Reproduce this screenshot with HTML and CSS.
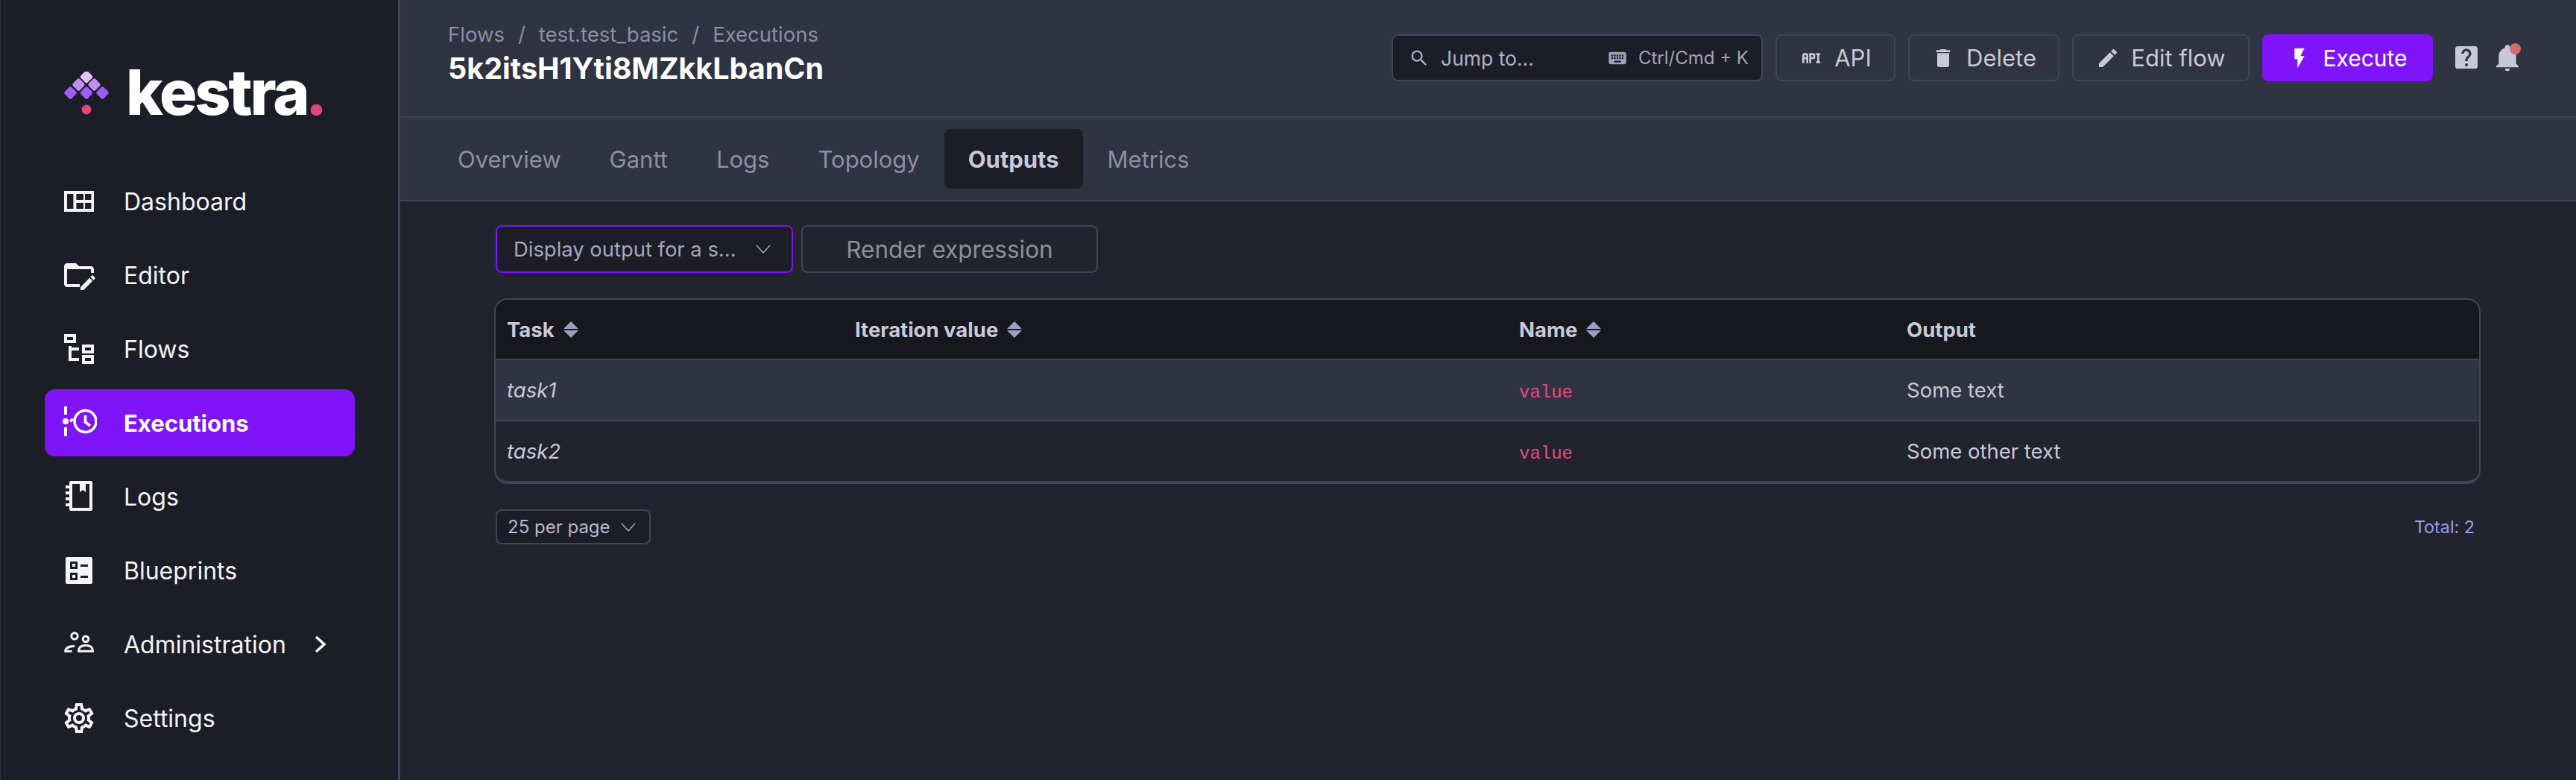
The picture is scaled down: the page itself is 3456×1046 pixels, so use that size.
FILE: index.html
```html
<!DOCTYPE html>
<html lang="en">
<head>
<meta charset="utf-8">
<title>Kestra - Execution outputs</title>
<link rel="stylesheet" href="styles.css">
</head>
<body>
<div class="app">
  <aside class="sidebar">
    <div class="brand">
      <svg class="brand-mark" viewBox="0 0 60 76" width="60" height="76">
        <g fill="#e0c4fb"><rect x="23.5" y="0.5" width="13" height="13" rx="2.5" transform="rotate(45 30 7)"/></g>
        <g fill="#c08ff5"><rect x="13" y="11" width="13" height="13" rx="2.5" transform="rotate(45 19.5 17.5)"/><rect x="34" y="11" width="13" height="13" rx="2.5" transform="rotate(45 40.5 17.5)"/></g>
        <g fill="#9f5cf5"><rect x="2" y="22" width="13" height="13" rx="2.5" transform="rotate(45 8.5 28.5)"/><rect x="23.5" y="22" width="13" height="13" rx="2.5" transform="rotate(45 30 28.5)"/><rect x="45" y="22" width="13" height="13" rx="2.5" transform="rotate(45 51.5 28.5)"/></g>
        <circle cx="30" cy="51" r="6.5" fill="#e0457b"/>
      </svg>
      <span class="brand-name">kestra<span class="brand-dot">.</span></span>
    </div>
    <nav class="nav">
      <a class="nav-item"><svg class="nav-icon" viewBox="0 0 24 24"><path fill-rule="evenodd" d="M2 5H22V19H2ZM4 7V17H8.2V7ZM10.2 7V11H15V7ZM16 7V11H20.2V7ZM10.2 13V17H15V13ZM16 13V17H20.2V13Z"/></svg><span>Dashboard</span></a>
      <a class="nav-item"><svg class="nav-icon" viewBox="0 0 24 24"><path d="M4 4C2.89 4 2 4.89 2 6V18C2 19.1 2.9 20 4 20H12.5V18H4V8H20V10.5H22V8C22 6.89 21.1 6 20 6H12L10 4H4Z"/><path transform="translate(1 1)" d="M21.7 13.35L20.7 14.35L18.65 12.3L19.65 11.3C19.86 11.09 20.21 11.09 20.42 11.3L21.7 12.58C21.91 12.79 21.91 13.14 21.7 13.35M12 18.94L18.06 12.88L20.11 14.93L14.06 21H12V18.94Z"/></svg><span>Editor</span></a>
      <a class="nav-item"><svg class="nav-icon" viewBox="0 0 24 24"><path d="M12 13H7V18H12V20H5V10H7V11H12V13M8 4V6H4V4H8M10 2H2V8H10V2M20 11V13H16V11H20M22 9H14V15H22V9M20 18V20H16V18H20M22 16H14V22H22V16Z"/></svg><span>Flows</span></a>
      <a class="nav-item is-active"><svg class="nav-icon" viewBox="0 0 48 48"><path d="M4 2H8V13H4ZM4 30H8V42H4Z"/><circle cx="6" cy="22" r="4"/><path class="stroke-thin" d="M12 22L16 19"/><circle class="stroke-thin" cx="32.5" cy="22" r="14.5"/><path class="stroke-thin" d="M32.5 14V23L39 28"/></svg><span>Executions</span></a>
      <a class="nav-item"><svg class="nav-icon" viewBox="0 0 48 48"><path fill-rule="evenodd" d="M11 5C11 3.9 11.9 3 13 3H40C41.1 3 42 3.9 42 5V41C42 42.1 41.1 43 40 43H13C11.9 43 11 42.1 11 41ZM15 7V39H38V7H33V18L29 15L25 18V7Z"/><path d="M6 9H11V13H6ZM6 17H11V21H6ZM6 25H11V29H6ZM6 33H11V37H6ZM11 13H15V17H11ZM11 21H15V25H11ZM11 29H15V33H11Z"/></svg><span>Logs</span></a>
      <a class="nav-item"><svg class="nav-icon" viewBox="0 0 48 48"><path fill-rule="evenodd" d="M8 6H40C41.1 6 42 6.9 42 8V40C42 41.1 41.1 42 40 42H8C6.9 42 6 41.1 6 40V8C6 6.9 6.9 6 8 6ZM12 12V22H22V12ZM15 15H19V19H15ZM12 27V37H22V27ZM15 30H19V34H15ZM26 16V19H36V16ZM26 31V34H36V31Z"/></svg><span>Blueprints</span></a>
      <a class="nav-item"><svg class="nav-icon" viewBox="0 0 48 48"><g class="stroke-slim"><circle cx="18" cy="13" r="4.2"/><circle cx="33" cy="17" r="3.8"/><path d="M5.5 34.5C5.5 29 10 26.5 18 26.5"/><path d="M5.5 33.3H14.5"/><path d="M23.5 33.3C23.5 28 27 25.5 33 25.5C39 25.5 42.5 28 42.5 33.3Z"/></g></svg><span>Administration</span><svg class="nav-chevron" viewBox="0 0 16 24"><path d="M2 2L13 12L2 22"/></svg></a>
      <a class="nav-item"><svg class="nav-icon" viewBox="0 0 24 24"><path d="M12,8A4,4 0 0,1 16,12A4,4 0 0,1 12,16A4,4 0 0,1 8,12A4,4 0 0,1 12,8M12,10A2,2 0 0,0 10,12A2,2 0 0,0 12,14A2,2 0 0,0 14,12A2,2 0 0,0 12,10M10,22C9.75,22 9.54,21.82 9.5,21.58L9.13,18.93C8.5,18.68 7.96,18.34 7.44,17.94L4.95,18.95C4.73,19.03 4.46,18.95 4.34,18.73L2.34,15.27C2.21,15.05 2.27,14.78 2.46,14.63L4.57,12.97L4.5,12L4.57,11L2.46,9.37C2.27,9.22 2.21,8.95 2.34,8.73L4.34,5.27C4.46,5.05 4.73,4.96 4.95,5.05L7.44,6.05C7.96,5.66 8.5,5.32 9.13,5.07L9.5,2.42C9.54,2.18 9.75,2 10,2H14C14.25,2 14.46,2.18 14.5,2.42L14.87,5.07C15.5,5.32 16.04,5.66 16.56,6.05L19.05,5.05C19.27,4.96 19.54,5.05 19.66,5.27L21.66,8.73C21.79,8.95 21.73,9.22 21.54,9.37L19.43,11L19.5,12L19.43,13L21.54,14.63C21.73,14.78 21.79,15.05 21.66,15.27L19.66,18.73C19.54,18.95 19.27,19.04 19.05,18.95L16.56,17.95C16.04,18.34 15.5,18.68 14.87,18.93L14.5,21.58C14.46,21.82 14.25,22 14,22H10M11.25,4L10.88,6.61C9.68,6.86 8.62,7.5 7.85,8.39L5.44,7.35L4.69,8.65L6.8,10.2C6.4,11.37 6.4,12.64 6.8,13.8L4.68,15.36L5.43,16.66L7.86,15.62C8.63,16.5 9.68,17.14 10.87,17.38L11.24,20H12.76L13.13,17.39C14.32,17.14 15.37,16.5 16.14,15.62L18.57,16.66L19.32,15.36L17.2,13.81C17.6,12.64 17.6,11.37 17.2,10.2L19.31,8.65L18.56,7.35L16.15,8.39C15.38,7.5 14.32,6.86 13.12,6.62L12.75,4H11.25Z"/></svg><span>Settings</span></a>
    </nav>
  </aside>

  <main class="main">
    <header class="topbar">
      <div class="title-block">
        <div class="crumbs"><span>Flows</span><span>/</span><span>test.test_basic</span><span>/</span><span>Executions</span></div>
        <h1 class="title">5k2itsH1Yti8MZkkLbanCn</h1>
      </div>
      <div class="actions">
        <div class="jump">
          <svg class="icon-28" viewBox="0 0 24 24"><path d="M9.5,3A6.5,6.5 0 0,1 16,9.5C16,11.11 15.41,12.59 14.44,13.73L14.71,14H15.5L20.5,19L19,20.5L14,15.5V14.71L13.73,14.44C12.59,15.41 11.11,16 9.5,16A6.5,6.5 0 0,1 3,9.5A6.5,6.5 0 0,1 9.5,3M9.5,5C7,5 5,7 5,9.5C5,12 7,14 9.5,14C12,14 14,12 14,9.5C14,7 12,5 9.5,5Z"/></svg>
          <span class="jump-label">Jump to...</span>
          <svg class="icon-28 key-icon" viewBox="0 0 24 24"><path d="M19,10H17V8H19M19,13H17V11H19M16,10H14V8H16M16,13H14V11H16M16,17H8V15H16M7,10H5V8H7M7,13H5V11H7M8,11H10V13H8M8,8H10V10H8M11,11H13V13H11M11,8H13V10H11M20,5H4C2.89,5 2,5.89 2,7V17A2,2 0 0,0 4,19H20A2,2 0 0,0 22,17V7C22,5.89 21.1,5 20,5Z"/></svg>
          <span class="jump-key">Ctrl/Cmd + K</span>
        </div>
        <button class="btn btn-api"><svg class="icon-32" viewBox="0 0 24 24"><path d="M7 7H5A2 2 0 0 0 3 9V17H5V13H7V17H9V9A2 2 0 0 0 7 7M7 11H5V9H7M14 7H10V17H12V13H14A2 2 0 0 0 16 11V9A2 2 0 0 0 14 7M14 11H12V9H14M20 9V15H21V17H17V15H18V9H17V7H21V9Z"/></svg>API</button>
        <button class="btn btn-delete"><svg class="icon-32" viewBox="0 0 24 24"><path d="M19,4H15.5L14.5,3H9.5L8.5,4H5V6H19M6,19A2,2 0 0,0 8,21H16A2,2 0 0,0 18,19V7H6V19Z"/></svg>Delete</button>
        <button class="btn btn-edit"><svg class="icon-32" viewBox="0 0 24 24"><path d="M20.71,7.04C21.1,6.65 21.1,6 20.71,5.63L18.37,3.29C18,2.9 17.35,2.9 16.96,3.29L15.12,5.12L18.87,8.87M3,17.25V21H6.75L17.81,9.93L14.06,6.18L3,17.25Z"/></svg>Edit flow</button>
        <button class="btn btn-primary"><svg class="icon-32" viewBox="0 0 24 24"><path d="M7,2V13H10V22L17,10H13L17,2H7Z"/></svg>Execute</button>
        <div class="tools">
          <svg class="icon-40" viewBox="0 0 24 24"><path d="M19,3H5C3.89,3 3,3.89 3,5V19A2,2 0 0,0 5,21H19A2,2 0 0,0 21,19V5C21,3.89 20.1,3 19,3M13,19H11V17H13V19M15.07,11.25L14.17,12.17C13.45,12.89 13,13.5 13,15H11V14.5C11,13.39 11.45,12.39 12.17,11.67L13.41,10.41C13.78,10.05 14,9.55 14,9C14,7.89 13.1,7 12,7A2,2 0 0,0 10,9H8A4,4 0 0,1 12,5A4,4 0 0,1 16,9C16,9.88 15.64,10.67 15.07,11.25Z"/></svg>
          <span class="bell"><svg class="icon-40" viewBox="0 0 24 24"><path d="M21,19V20H3V19L5,17V11C5,7.9 7.03,5.17 10,4.29C10,4.19 10,4.1 10,4A2,2 0 0,1 12,2A2,2 0 0,1 14,4C14,4.1 14,4.19 14,4.29C16.97,5.17 19,7.9 19,11V17L21,19M14,21A2,2 0 0,1 12,23A2,2 0 0,1 10,21"/></svg><i class="bell-dot"></i></span>
        </div>
      </div>
    </header>

    <div class="tabs">
      <a class="tab">Overview</a>
      <a class="tab">Gantt</a>
      <a class="tab">Logs</a>
      <a class="tab">Topology</a>
      <a class="tab is-active">Outputs</a>
      <a class="tab">Metrics</a>
    </div>

    <section class="content">
      <div class="filters">
        <div class="select select-focus"><span>Display output for a s...</span><svg class="caret" viewBox="0 0 20 12"><path d="M1 1L10 11L19 1"/></svg></div>
        <button class="btn-render">Render expression</button>
      </div>
      <div class="table-wrap">
        <table class="table">
          <colgroup><col class="col-task"><col class="col-iter"><col class="col-name"><col></colgroup>
          <thead>
            <tr>
              <th><span class="th-inner">Task<i class="sort"><b class="up"></b><b class="down"></b></i></span></th>
              <th><span class="th-inner">Iteration value<i class="sort"><b class="up"></b><b class="down"></b></i></span></th>
              <th><span class="th-inner">Name<i class="sort"><b class="up"></b><b class="down"></b></i></span></th>
              <th>Output</th>
            </tr>
          </thead>
          <tbody>
            <tr class="is-hover"><td class="task">task1</td><td></td><td><code class="code">value</code></td><td>Some text</td></tr>
            <tr><td class="task">task2</td><td></td><td><code class="code">value</code></td><td>Some other text</td></tr>
          </tbody>
        </table>
      </div>
      <div class="pager">
        <div class="select select-small"><span>25 per page</span><svg class="caret" viewBox="0 0 20 12"><path d="M1 1L10 11L19 1"/></svg></div>
        <span class="total">Total: 2</span>
      </div>
    </section>
  </main>
</div>
</body>
</html>
```
FILE: styles.css
```css
* { box-sizing: border-box; }
html, body { margin: 0; height: 100%; }
body { background: #21242e; color: #c9c8d8; font-family: Inter, "Noto Sans", sans-serif; overflow: hidden; }
svg { fill: currentColor; display: block; flex: none; }

.app { display: flex; height: 1046px; }

.sidebar { width: 537px; flex: none; background: #1c1e27; border-left: 1px solid #2f3241; border-right: 3px solid #404559; }
.brand { height: 225px; display: flex; align-items: flex-start; padding: 96px 0 0 85px; gap: 23px; }
.brand-name { font-size: 84px; font-weight: 800; line-height: 56px; color: #fff; letter-spacing: -3px; }
.brand-dot { color: #e0457b; margin-left: -3px; }

.nav { display: flex; flex-direction: column; gap: 9px; }
.nav-item { display: flex; align-items: center; height: 90px; width: 416px; margin-left: 59px; padding-left: 22px; gap: 36px; border-radius: 14px; color: #f4f4f8; font-size: 32px; }
.nav-item.is-active { background: #7f14f8; color: #fff; font-weight: 700; font-size: 31px; }
.nav-icon { width: 48px; height: 48px; }
.stroke-thin { fill: none; stroke: currentColor; stroke-width: 3.6; }
.stroke-slim { fill: none; stroke: currentColor; stroke-width: 3; }
.nav-chevron { width: 16px; height: 24px; margin-left: 2px; fill: none; stroke: currentColor; stroke-width: 3.6; }

.main { flex: 1; min-width: 0; display: flex; flex-direction: column; }

.topbar { height: 158px; flex: none; background: #303342; border-bottom: 2px solid #404559; display: flex; justify-content: space-between; padding: 0 72px 0 64px; }
.title-block { padding-top: 28px; }
.crumbs { display: flex; gap: 18px; font-size: 27.5px; line-height: 36px; color: #8f8da8; }
.title { margin: 4px 0 0; font-size: 39.5px; line-height: 48px; font-weight: 700; color: #fff; }

.actions { display: flex; align-items: flex-start; gap: 17px; padding-top: 46px; }
.jump { width: 498px; height: 63px; background: #1c1e27; border: 2px solid #404559; border-radius: 8px; display: flex; align-items: center; padding-left: 21px; color: #b0aec6; }
.jump-label { font-size: 26.5px; margin-left: 15px; flex: 1; }
.jump-key { font-size: 24px; margin: 0 17px 0 14px; color: #a3a1bb; }
.key-icon { color: #a3a1bb; }
.icon-28 { width: 28px; height: 28px; }
.icon-32 { width: 32px; height: 32px; }
.icon-40 { width: 40px; height: 40px; }

.btn { height: 63px; border: 2px solid #404559; border-radius: 8px; background: transparent; color: #c9c8d8; font: 400 31px Inter, "Noto Sans", sans-serif; display: flex; align-items: center; justify-content: center; gap: 15px; padding: 0; }
.btn-api { width: 161px; }
.btn-delete { width: 203px; }
.btn-edit { width: 238px; }
.btn-primary { width: 229px; background: #7f14f8; border-color: #7f14f8; color: #fff; font-size: 30px; }

.tools { display: flex; gap: 15px; padding: 11px 0 0 8px; color: #c9c8d8; }
.bell { position: relative; display: block; }
.bell-dot { position: absolute; right: 2px; top: 1px; width: 15px; height: 15px; border-radius: 50%; background: #d46a6a; }

.tabs { height: 112px; flex: none; background: #303342; border-bottom: 2px solid #404559; display: flex; align-items: center; gap: 1px; padding-left: 45px; }
.tab { height: 80px; padding: 0 32px; display: flex; align-items: center; border-radius: 8px; font-size: 31px; color: #8f8da8; }
.tab.is-active { background: #1c1e27; color: #c9c8d8; font-weight: 700; }

.content { flex: 1; padding: 32px 128px 0 126px; }
.filters { display: flex; gap: 11px; margin-left: 2px; }
.select { display: flex; align-items: center; justify-content: space-between; background: #1c1e27; border: 2px solid #404559; border-radius: 8px; color: #a7a5be; }
.select-focus { width: 399px; height: 64px; border-color: #7f14f8; padding: 0 28px 0 22px; font-size: 27.4px; }
.btn-render { width: 398px; height: 64px; background: transparent; border: 2px solid #404559; border-radius: 8px; color: #8e8f9a; font: 400 31.5px Inter, "Noto Sans", sans-serif; }
.caret { width: 20px; height: 12px; fill: none; stroke: #a7a5be; stroke-width: 1.5; }

.table-wrap { margin-top: 34px; border: 2px solid #404559; border-bottom-width: 4px; border-radius: 18px; overflow: hidden; }
.table { width: 100%; border-collapse: collapse; table-layout: fixed; font-size: 27.5px; color: #c9c8d8; }
.col-task { width: 467px; }
.col-iter { width: 891px; }
.col-name { width: 520px; }
.table th { height: 80px; background: #17181d; text-align: left; padding: 0 15px; border-bottom: 2px solid #404559; font-weight: 700; }
.table td { height: 82px; padding: 0 15px; }
.table tbody tr + tr td { height: 81px; border-top: 2px solid #404559; }
.is-hover td { background: #303342; }
.task { font-style: italic; }
.th-inner { display: inline-flex; align-items: center; gap: 12px; }
.sort { display: flex; flex-direction: column; gap: 2px; }
.up, .down { display: block; width: 0; height: 0; border-left: 10px solid transparent; border-right: 10px solid transparent; }
.up { border-bottom: 10px solid #a29cc0; }
.down { border-top: 10px solid #a29cc0; }
.code { font-family: "Liberation Mono", monospace; font-size: 24px; color: #e64a85; }

.pager { margin-top: 34px; margin-left: 2px; display: flex; align-items: center; justify-content: space-between; padding-right: 8px; }
.select-small { width: 208px; height: 47px; padding: 0 18px 0 14px; font-size: 24px; color: #b9b8cc; border-color: #404559; }
.total { font-size: 23.3px; color: #9f9aef; }
```
